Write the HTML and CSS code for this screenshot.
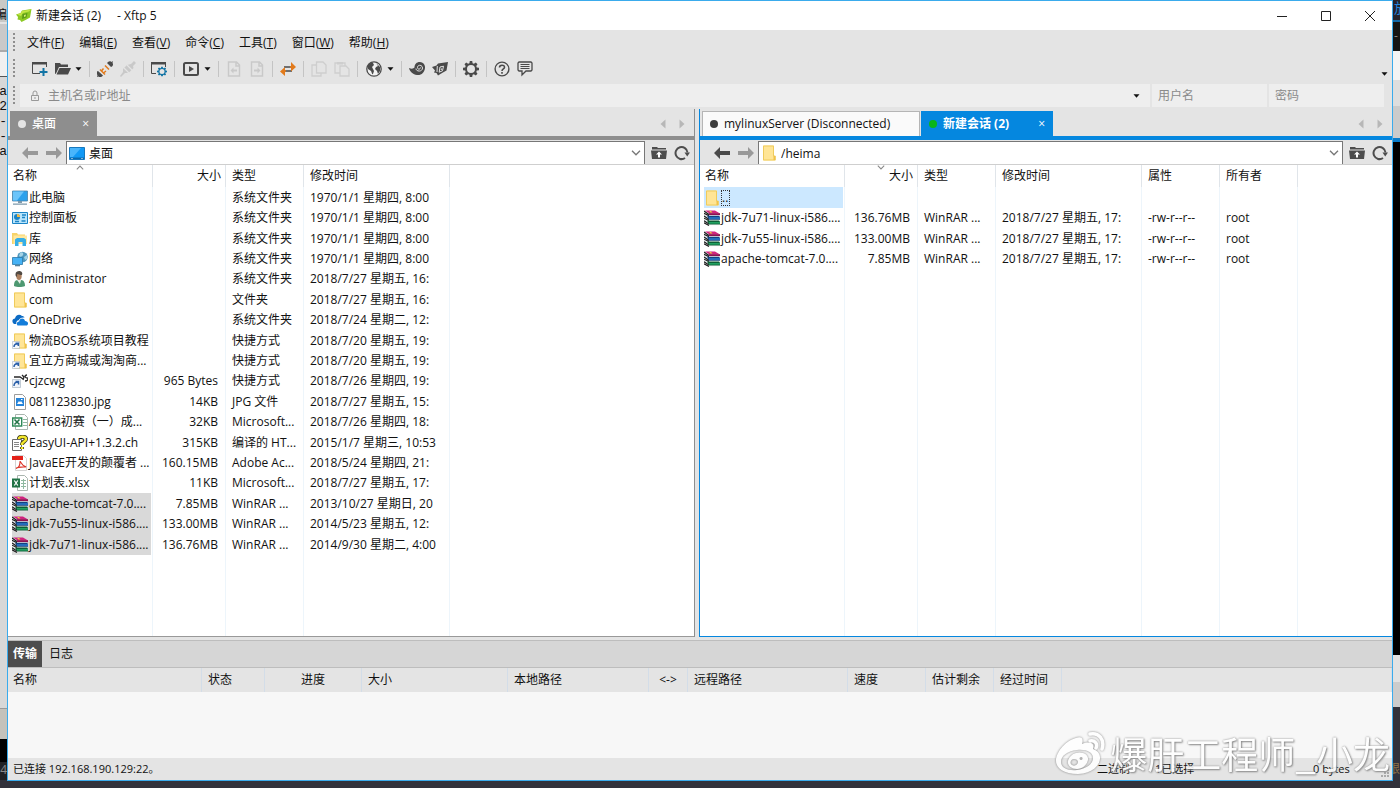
FILE: index.html
```html
<!DOCTYPE html>
<html lang="zh-CN">
<head>
<meta charset="utf-8">
<title>新建会话 (2) - Xftp 5</title>
<link rel="stylesheet" href="styles.css">
</head>
<body>
<svg class="defs" aria-hidden="true">
  <symbol id="rar" viewBox="0 0 16 16"><path fill="#e9ecef" d="M0 1h5v14L0 12z"/><path fill="none" stroke="#1d1d1d" stroke-width="1.100" d="M0 1l5 3.500M0 3.300l5 2.400M0 6l5 3.200M0 8.200l5 2.200M0 10.800l5 3.200M0 12.800l5 2.600"/><path fill="#d0237f" d="M1 .5h10l5 3H5.500z"/><path fill="#8f1150" d="M5 3.200h11v2H5z"/><path fill="#f4f4f4" d="M5 5h10v.8H5zM5 9.800h10v.7H5zM5 14.600h10v.7H5z"/><path fill="#12427f" d="M3 5.800h12l1 1v3H5z"/><path fill="#2a7fd6" d="M5 7.300h11v1.400H5z"/><path fill="#0c5f36" d="M3 10.600h12l1 1v3H5z"/><path fill="#27b26c" d="M5 12.200h11v1.300H5z"/><path fill="#e3cf3b" d="M5 1h2l1.500 1.600H6.500z"/></symbol>
  <symbol id="folder" viewBox="0 0 16 16"><path fill="#ffe596" d="M2 .500h11V11h1.500v4.500H2z"/><path fill="none" stroke="#efcb5c" d="M2.500 1h10v10h1.800v4H2.500z"/><path fill="#f0c14b" d="M12.500 11H14v4h-1.500z"/></symbol>
  <symbol id="shortcut" viewBox="0 0 16 16"><use href="#folder"/><path fill="#f5f8fc" stroke="#a9b6c4" stroke-width=".6" d="M.5 8.500h7v7h-7z"/><path fill="none" stroke="#2a5fa8" stroke-width="1.500" d="M2 14c0-2 1-3.200 3.800-3.200M3.500 10.300h2.800V13"/></symbol>
  <symbol id="desktop" viewBox="0 0 16 13"><path fill="#1199f5" stroke="#1878bd" d="M.5.500h15v12H.5z"/><path fill="#49b5fb" d="M1 1h11L4 10H1z"/><path fill="#0b69ad" d="M1 10.500h14V12H1z"/><path fill="#fff" d="M2 11h2v.6H2zM12 11h2v.6h-2z"/></symbol>
  <symbol id="pc" viewBox="0 0 16 16"><path fill="#2ba1ec" stroke="#4b83a8" stroke-width=".8" d="M.5 1h15v10H.5z"/><path fill="#6cc5fa" d="M1 1.500h11l-7 9H1z"/><path fill="#7e99ab" d="M6 11h4v2H6zM1 13.500h14v1.300H1z"/></symbol>
  <symbol id="panel" viewBox="0 0 16 16"><path fill="#b9e4fb" stroke="#1b84c6" d="M.5 2.500h15v11H.5z"/><circle cx="5" cy="7" r="3" fill="#1b84c6"/><path fill="#f7b93e" d="M5 7V4a3 3 0 0 1 3 3z"/><path stroke="#1b84c6" stroke-width="1.400" d="M10 5h4M10 7.500h3M3 11.500h4M9.500 11h4"/></symbol>
  <symbol id="library" viewBox="0 0 16 16"><path fill="#f7d36a" d="M0 2h5l1 1.500h7V13H0z"/><path fill="#ffe79e" d="M1.500 4.500H15V13H1.500z"/><path fill="#37aee6" d="M3 8.500 5 7h7l2 1.500V15h-3.500v-4h-4v4H3z"/></symbol>
  <symbol id="network" viewBox="0 0 16 16"><circle cx="10.500" cy="6" r="5.200" fill="#4e97bd"/><path fill="#a4d3e6" d="M8 2c2-2 4 0 3 2S8 6 7 5zM12 6l3-2v4l-2 1z"/><path fill="#46b2f5" stroke="#2b78aa" stroke-width=".8" d="M.5 6.500h10v7H.5z"/><path fill="#57849d" d="M3 14h5v1.300H3z"/></symbol>
  <symbol id="person" viewBox="0 0 16 16"><path fill="#4d9871" d="M2 15c0-4 1-6 4-6h3c3 0 4 3 4 6-3 1.300-8 1.300-11 0z"/><path fill="#e8efe7" d="m5 9 3 4 1-4z"/><ellipse cx="7" cy="5" rx="2.700" ry="3.900" fill="#ad805f"/><path fill="#514a43" d="M3.700 5C3 2 4 .2 7 0c3 0 4 2.400 2.900 4C8 4 6 3 5.200 2.900L5 6z"/></symbol>
  <symbol id="onedrive" viewBox="0 0 16 16"><path fill="#0c6bc4" d="M1 11C-.5 8.500 1 6.500 3 6.500 3.500 3 7.500 1.500 10 4c1.200 0 2 .5 2.500 1.500C9 5 7 7 6.700 8.200 4.800 8.500 4 10 4.300 12H2z"/><path fill="#137dda" d="M5.500 13.500C4 12 5 9.500 7.200 9.500 7.500 6 12 5.500 13 9c3 0 4 3 2 4.500z"/></symbol>
  <symbol id="tool" viewBox="0 0 16 16"><path fill="none" stroke="#292929" stroke-width="1.300" d="M2 4h6l3 2M10 2l2 2-1 3M15 2c-3 0-2 3 0 3s1 3-2 3"/><path fill="#eef3fa" stroke="#9eacba" stroke-width=".6" d="M.5 6.500h8v8h-8z"/><path fill="none" stroke="#2a5fa8" stroke-width="1.500" d="M2 13c0-3 1-4 4-4M3.500 8.500h3v3"/></symbol>
  <symbol id="image" viewBox="0 0 16 16"><path fill="#fff" stroke="#9c9c9c" d="M2.500.5h8l3 3v12h-11z"/><path fill="#2684d9" d="M4 4h8v8H4z"/><path fill="#fff" d="m5 10 2-3 1 1.300L9 7l2 3zM9 5h1.500v1H9z"/></symbol>
  <symbol id="excel" viewBox="0 0 16 16"><path fill="#fff" stroke="#a9b5ae" d="M5.500 .5h7l3 3v12h-10z"/><path stroke="#8fb8a0" d="M9 5.500h5M9 8.500h5M9 11.500h5M11.500 4v10"/><path fill="#217346" d="M0 3.500h8v9H0z"/><path fill="none" stroke="#fff" stroke-width="1.300" d="m2.300 5.500 3.500 5M5.800 5.500l-3.500 5"/></symbol>
  <symbol id="sheet" viewBox="0 0 16 16"><path fill="#fff" stroke="#a9b5ae" d="M3.500 .5h9l3 3v12h-12z"/><path stroke="#8fb8a0" d="M11 5.500h4M11 8.500h4M11 11.500h4"/><path fill="#fff" stroke="#2f8a58" stroke-width="1.400" d="M.7 4h9v8h-9z"/><path fill="none" stroke="#217346" stroke-width="1.600" d="m2.500 5.500 5 5M7.500 5.500l-5 5"/></symbol>
  <symbol id="chm" viewBox="0 0 16 16"><path fill="#fff" stroke="#6b6b6b" d="M.5 4.500h9v11h-9z"/><path stroke="#888" d="M2 7.500h5M2 9.500h5M2 11.500h5"/><path fill="none" stroke="#343315" stroke-width="4" d="M7 4c0-3 7-3 7 0s-4 2-4 6M10 12v2"/><path fill="none" stroke="#f3e72b" stroke-width="2.500" d="M7 4c0-3 7-3 7 0s-4 2-4 6M10 12v2"/></symbol>
  <symbol id="pdf" viewBox="0 0 16 16"><path fill="#fff" stroke="#d4d4d4" d="M3.500.5h8l3 3v12h-11z"/><path fill="#e32119" d="M0 1h11v4H0z"/><path fill="none" stroke="#dc372b" stroke-width="1.100" d="M4 13.500c3-1 4-4 4-6.500s1.500 4 5.500 4.500c2 1-7-.5-9.500 2"/></symbol>
  <symbol id="left" viewBox="0 0 16 12"><path fill="currentColor" d="M0 6 6 0v4h10v4H6v4z"/></symbol>
  <symbol id="right" viewBox="0 0 16 12"><path fill="currentColor" d="M16 6 10 0v4H0v4h10v4z"/></symbol>
  <symbol id="chevron" viewBox="0 0 10 6"><path fill="none" stroke="currentColor" stroke-width="1.300" d="m1 .8 4 4 4-4"/></symbol>
  <symbol id="up" viewBox="0 0 16 16"><path fill="#4d4d4d" d="M1 2h5l1 1h8v1.500H1zM0 5.500h16L15 14H1z"/><path fill="#fff" d="m8 6.500 3 3H9V12.500H7V9.500H5z"/></symbol>
  <symbol id="reload" viewBox="0 0 16 16"><path fill="none" stroke="#4d4d4d" stroke-width="2" d="M11 13A6 6 0 1 1 13.500 7.500"/><path fill="#4d4d4d" d="M10.500 7.500H16l-2.800 4z"/></symbol>
  <symbol id="caret" viewBox="0 0 7 4"><path fill="#111" d="M.5.300h6L3.500 3.800z"/></symbol>
  <symbol id="prev" viewBox="0 0 6 10"><path fill="#b7b7b7" d="M5.500.500v9L.5 5z"/></symbol>
  <symbol id="next" viewBox="0 0 6 10"><path fill="#b7b7b7" d="M.5.500v9l5-4.500z"/></symbol>
  <symbol id="gear" viewBox="0 0 16 16"><path fill="currentColor" fill-rule="evenodd" d="M6.800 0h2.400l.4 2.200 1.300.5L12.800 1.500l1.700 1.700-1.200 1.900.5 1.300 2.200.4v2.400l-2.200.4-.5 1.300 1.200 1.900-1.700 1.700-1.900-1.200-1.300.5L9.200 16H6.800l-.4-2.200-1.300-.5-1.900 1.200-1.700-1.700 1.200-1.900-.5-1.300L0 9.200V6.800l2.200-.4.500-1.300-1.200-1.900 1.700-1.700 1.900 1.200 1.300-.5zM8 4a4 4 0 1 0 0 8 4 4 0 0 0 0-8z"/></symbol>
</svg>

<aside class="edge edge-left" aria-hidden="true">
  <span class="frag frag-menu">编</span>
  <pre class="frag frag-term">1

ta
42
--
--
ta</pre>
  <span class="frag frag-clock">24</span>
</aside>

<main class="window">
  <header class="titlebar">
    <svg class="logo" viewBox="0 0 16 16"><path fill="#8cc924" d="M0 6.500 4.500 5 6 2.500 15.500 1 14 9.500l-4 2.200L5.500 14 4 12l-2.500-.5L2 9z"/><path fill="#c3e545" d="M1 6.500 5 5l1-2 9-1.500-2 2-6 1.500-2 3z"/><path fill="#5c9c17" d="m6.500 6 5-1-1 4.500L6 11z"/><path fill="#d6ee75" d="m8 7 2-.5-.5 2L8 9z"/></svg>
    <h1 class="title"><span>新建会话 (2)</span><span>- Xftp 5</span></h1>
    <div class="winbuttons">
      <button aria-label="最小化"><svg viewBox="0 0 12 12"><path d="M1 6.500h10"/></svg></button>
      <button aria-label="最大化"><svg viewBox="0 0 12 12"><path d="M1.500 1.500h9v9h-9z"/></svg></button>
      <button aria-label="关闭"><svg viewBox="0 0 12 12"><path d="m1 1 10 10M11 1 1 11"/></svg></button>
    </div>
  </header>

  <nav class="menubar">
    <i class="grip"></i>
    <button>文件(<u>F</u>)</button><button>编辑(<u>E</u>)</button><button>查看(<u>V</u>)</button><button>命令(<u>C</u>)</button><button>工具(<u>T</u>)</button><button>窗口(<u>W</u>)</button><button>帮助(<u>H</u>)</button>
  </nav>

  <div class="toolbar">
    <i class="grip"></i>
    <button aria-label="新建"><svg viewBox="0 0 16 16"><path fill="#4a4a4a" d="M0 1h15v2.500H0z"/><path fill="none" stroke="#4a4a4a" d="M.5 2v10.500H8M14.500 2v4"/><path stroke="#1274a5" stroke-width="2" d="M11.500 7v8M7.500 11h8"/></svg></button>
    <button class="drop" aria-label="打开"><svg viewBox="0 0 16 16"><path fill="#4a4a4a" d="M0 2h5l1 1.500h7V6H4l-3 6.500L0 13z"/><path fill="#4a4a4a" d="M4.500 7H16l-3 6.500H1.500z"/></svg><svg class="caret"><use href="#caret"/></svg></button>
    <i class="sep"></i>
    <button aria-label="重新连接"><svg viewBox="0 0 16 16"><path fill="#4a4a4a" d="M10.500 1.500C12 0 14 0 14.500 1L16 0l-.5 2c1 1 .5 2.500-.5 3.500l-1 .5-4-4zM0 10.500l1-.5 5 4.500-1 1c-1.500 1-3 .8-3.500 0L0 16l.5-2c-.8-1-1-2.500-.5-3.500z"/><path stroke="#e27a1b" stroke-width="1.500" fill="none" d="m3 8.500 5 5M4.500 10l2-2.500M6.500 12l2.500-2M8 4.500l4 4"/></svg></button>
    <button aria-label="断开" disabled><svg viewBox="0 0 16 16"><path fill="#c9c9c9" d="m11 3 3-3 2 2-3 3 .5 2-4 4-2 1H5l-4 4-1-1 3-4V8l4-4z"/><path stroke="#e4e4e4" stroke-width="1.200" d="m4 7 5 5M7 4l5 5"/></svg></button>
    <i class="sep"></i>
    <button aria-label="会话属性"><svg viewBox="0 0 16 16"><path fill="#4a4a4a" d="M0 1h15v2.500H0z"/><path fill="none" stroke="#4a4a4a" d="M.5 2v10.500H5M14.500 2v4"/><g color="#1274a5"><use href="#gear" x="6" y="5.500" width="10" height="10"/></g></svg></button>
    <i class="sep"></i>
    <button class="drop wide" aria-label="执行"><svg viewBox="0 0 18 16"><rect x="2" y="2" width="14" height="12" rx="1.500" fill="none" stroke="#4a4a4a" stroke-width="2"/><path fill="#4a4a4a" d="m7 5 5 3-5 3z"/></svg><svg class="caret"><use href="#caret"/></svg></button>
    <i class="sep"></i>
    <button aria-label="下载" disabled><svg viewBox="0 0 16 16"><path fill="none" stroke="#c9c9c9" stroke-width="1.500" d="M2.500 1h8l3 3v11h-11zM10 1v4h3.500"/><path fill="#c9c9c9" d="m4.500 9.500 3-3v2H11v2H7.500v2z"/></svg></button>
    <button aria-label="上传" disabled><svg viewBox="0 0 16 16"><path fill="none" stroke="#c9c9c9" stroke-width="1.500" d="M2.500 1h8l3 3v11h-11zM10 1v4h3.500"/><path fill="#c9c9c9" d="m11.500 9.500-3-3v2H5v2h3.500v2z"/></svg></button>
    <i class="sep"></i>
    <button aria-label="同步"><svg viewBox="0 0 16 16"><path stroke="#4a4a4a" stroke-width="1.300" d="M4 6h8M4 10h8"/><path fill="#e27a1b" d="M10 5.300h1V1l5 5-5 4.500V6.700h-1zM6 9.300H5V6l-5 4.500L5 15v-4.300h1z"/></svg></button>
    <i class="sep"></i>
    <button aria-label="复制" disabled><svg viewBox="0 0 16 16"><path fill="none" stroke="#cecece" stroke-width="1.300" d="M5.500 1H12l3 3v8H5.500zM5.500 4H1v11h9v-3"/></svg></button>
    <button aria-label="粘贴" disabled><svg viewBox="0 0 16 16"><path fill="none" stroke="#cecece" stroke-width="1.300" d="M6 5h6l3 3v7H6zM6 12H1V2h10v3"/><path fill="#cecece" d="M3 1h6v2.500H3z"/></svg></button>
    <i class="sep"></i>
    <button class="drop wide" aria-label="语言"><svg viewBox="0 0 18 16"><circle cx="9" cy="8" r="7.200" fill="#f2f2f2" stroke="#4a4a4a" stroke-width="1.300"/><path fill="#4a4a4a" d="M3 4c2-2 4-3 5-2l1 2-2 2 1 2 1 2-1 3c-1 1-1-1-2-3L3 8zM11 2l4 4v4l-2 3-1-3-2-2 1-2 2-1z"/></svg><svg class="caret"><use href="#caret"/></svg></button>
    <i class="sep"></i>
    <button aria-label="Xshell"><svg viewBox="0 0 16 16"><path fill="#4a4a4a" d="M0 7c2.500 1 4.500.8 5.500-.5C5.500 3 8 .8 11 1c3.500.2 5.300 3 5 6-.5 4.500-3.500 7.500-8 7C4 13.500 1 11 0 7z"/><path fill="none" stroke="#e4e4e4" d="M7 7.500c0 3.500 6.500 3.500 6.500-.5 0-3.500-5-3.500-5-.5 0 2.300 3 2 3 0"/></svg></button>
    <button aria-label="Xftp"><svg viewBox="0 0 16 16"><path fill="#4a4a4a" d="M0 6 4.500 4.500 6 2.500 16 1l-1.500 8.500-4 2.200L6 14.500 4.500 12 2 11.500l1-2z"/><path fill="none" stroke="#e4e4e4" d="M5.300 5 5 11M8 6l3.500-.8-1 4.600-3.300 1.400zM9.500 7.500l-.3 1.500"/></svg></button>
    <i class="sep"></i>
    <button class="dark" aria-label="选项"><svg><use href="#gear"/></svg></button>
    <i class="sep"></i>
    <button aria-label="帮助"><svg viewBox="0 0 16 16"><circle cx="8" cy="8" r="6.900" fill="none" stroke="#4a4a4a" stroke-width="1.400"/><path fill="none" stroke="#4a4a4a" stroke-width="1.600" d="M5.500 6.500c0-3 5-3 5-.3C10.500 8 8 7.700 8 10M8 11v1.800"/></svg></button>
    <button aria-label="反馈"><svg viewBox="0 0 16 16"><path fill="none" stroke="#4a4a4a" stroke-width="1.300" d="M2 1h12l1 1v7l-1 1H9l-4 4v-4H2L1 9V2z"/><path stroke="#4a4a4a" d="M3.500 3.500h9M3.500 5.500h9M3.500 7.500h9"/></svg></button>
    <svg class="caret overflow"><use href="#caret"/></svg>
  </div>

  <form class="address">
    <i class="grip"></i>
    <div class="host">
      <svg class="lock" viewBox="0 0 9 12"><path fill="none" stroke="#999" d="M1 5.500h7v5H1zM2.500 5V3a2 2 0 0 1 4 0v2M4.500 7v2"/></svg>
      <input type="text" aria-label="主机名或IP地址" placeholder="主机名或IP地址">
      <button type="button" aria-label="历史"><svg class="caret"><use href="#caret"/></svg></button>
    </div>
    <input class="cred" type="text" aria-label="用户名" placeholder="用户名">
    <input class="cred" type="password" aria-label="密码" placeholder="密码">
  </form>

  <div class="panes">
    <section class="pane local">
      <div class="tabs">
        <button class="tab current"><i class="dot"></i><span>桌面</span><span class="x">×</span></button>
        <span class="tabnav"><button aria-label="上一个"><svg><use href="#prev"/></svg></button><button aria-label="下一个"><svg><use href="#next"/></svg></button></span>
      </div>
      <div class="pathrow">
        <div class="navs"><button class="off" aria-label="后退"><svg><use href="#left"/></svg></button><button class="off" aria-label="前进"><svg><use href="#right"/></svg></button></div>
        <div class="path"><svg class="pathicon desk"><use href="#desktop"/></svg><input type="text" aria-label="本地路径" value="桌面"><button aria-label="展开"><svg class="chev"><use href="#chevron"/></svg></button></div>
        <div class="acts"><button aria-label="上级目录"><svg><use href="#up"/></svg></button><button aria-label="刷新"><svg><use href="#reload"/></svg></button></div>
      </div>
      <div class="list">
        <table class="files">
          <colgroup><col class="c-name"><col class="c-size"><col class="c-type"><col class="c-date"><col></colgroup>
          <thead><tr><th>名称<svg class="sort asc"><use href="#chevron"/></svg></th><th class="num">大小</th><th>类型</th><th>修改时间</th><th></th></tr></thead>
          <tbody>
            <tr><td><span class="name"><svg><use href="#pc"/></svg>此电脑</span></td><td></td><td>系统文件夹</td><td>1970/1/1 星期四, 8:00</td><td></td></tr>
            <tr><td><span class="name"><svg><use href="#panel"/></svg>控制面板</span></td><td></td><td>系统文件夹</td><td>1970/1/1 星期四, 8:00</td><td></td></tr>
            <tr><td><span class="name"><svg><use href="#library"/></svg>库</span></td><td></td><td>系统文件夹</td><td>1970/1/1 星期四, 8:00</td><td></td></tr>
            <tr><td><span class="name"><svg><use href="#network"/></svg>网络</span></td><td></td><td>系统文件夹</td><td>1970/1/1 星期四, 8:00</td><td></td></tr>
            <tr><td><span class="name"><svg><use href="#person"/></svg>Administrator</span></td><td></td><td>系统文件夹</td><td>2018/7/27 星期五, 16:</td><td></td></tr>
            <tr><td><span class="name"><svg><use href="#folder"/></svg>com</span></td><td></td><td>文件夹</td><td>2018/7/27 星期五, 16:</td><td></td></tr>
            <tr><td><span class="name"><svg><use href="#onedrive"/></svg>OneDrive</span></td><td></td><td>系统文件夹</td><td>2018/7/24 星期二, 12:</td><td></td></tr>
            <tr><td><span class="name"><svg><use href="#shortcut"/></svg>物流BOS系统项目教程</span></td><td></td><td>快捷方式</td><td>2018/7/20 星期五, 19:</td><td></td></tr>
            <tr><td><span class="name"><svg><use href="#shortcut"/></svg>宜立方商城或淘淘商...</span></td><td></td><td>快捷方式</td><td>2018/7/20 星期五, 19:</td><td></td></tr>
            <tr><td><span class="name"><svg><use href="#tool"/></svg>cjzcwg</span></td><td class="num">965 Bytes</td><td>快捷方式</td><td>2018/7/26 星期四, 19:</td><td></td></tr>
            <tr><td><span class="name"><svg><use href="#image"/></svg>081123830.jpg</span></td><td class="num">14KB</td><td>JPG 文件</td><td>2018/7/27 星期五, 15:</td><td></td></tr>
            <tr><td><span class="name"><svg><use href="#sheet"/></svg>A-T68初赛（一）成...</span></td><td class="num">32KB</td><td>Microsoft...</td><td>2018/7/26 星期四, 18:</td><td></td></tr>
            <tr><td><span class="name"><svg><use href="#chm"/></svg>EasyUI-API+1.3.2.ch</span></td><td class="num">315KB</td><td>编译的 HT...</td><td>2015/1/7 星期三, 10:53</td><td></td></tr>
            <tr><td><span class="name"><svg><use href="#pdf"/></svg>JavaEE开发的颠覆者 ...</span></td><td class="num">160.15MB</td><td>Adobe Ac...</td><td>2018/5/24 星期四, 21:</td><td></td></tr>
            <tr><td><span class="name"><svg><use href="#excel"/></svg>计划表.xlsx</span></td><td class="num">11KB</td><td>Microsoft...</td><td>2018/7/27 星期五, 17:</td><td></td></tr>
            <tr class="picked"><td><span class="name"><svg><use href="#rar"/></svg>apache-tomcat-7.0....</span></td><td class="num">7.85MB</td><td>WinRAR ...</td><td>2013/10/27 星期日, 20</td><td></td></tr>
            <tr class="picked"><td><span class="name"><svg><use href="#rar"/></svg>jdk-7u55-linux-i586....</span></td><td class="num">133.00MB</td><td>WinRAR ...</td><td>2014/5/23 星期五, 12:</td><td></td></tr>
            <tr class="picked"><td><span class="name"><svg><use href="#rar"/></svg>jdk-7u71-linux-i586....</span></td><td class="num">136.76MB</td><td>WinRAR ...</td><td>2014/9/30 星期二, 4:00</td><td></td></tr>
            <tr class="rest"><td></td><td></td><td></td><td></td><td></td></tr>
          </tbody>
        </table>
      </div>
    </section>

    <section class="pane remote">
      <div class="tabs">
        <button class="tab idle"><i class="dot"></i><span>mylinuxServer (Disconnected)</span></button>
        <button class="tab current"><i class="dot"></i><span>新建会话 (2)</span><span class="x">×</span></button>
        <span class="tabnav"><button aria-label="上一个"><svg><use href="#prev"/></svg></button><button aria-label="下一个"><svg><use href="#next"/></svg></button></span>
      </div>
      <div class="pathrow">
        <div class="navs"><button aria-label="后退"><svg><use href="#left"/></svg></button><button class="off" aria-label="前进"><svg><use href="#right"/></svg></button></div>
        <div class="path"><svg class="pathicon"><use href="#folder"/></svg><input type="text" aria-label="远程路径" value="/heima"><button aria-label="展开"><svg class="chev"><use href="#chevron"/></svg></button></div>
        <div class="acts"><button aria-label="上级目录"><svg><use href="#up"/></svg></button><button aria-label="刷新"><svg><use href="#reload"/></svg></button></div>
      </div>
      <div class="list">
        <table class="files">
          <colgroup><col class="c-name"><col class="c-size"><col class="c-type"><col class="c-date"><col class="c-attr"><col class="c-attr"><col></colgroup>
          <thead><tr><th>名称</th><th class="num">大小<svg class="sort"><use href="#chevron"/></svg></th><th>类型</th><th>修改时间</th><th>属性</th><th>所有者</th><th></th></tr></thead>
          <tbody>
            <tr class="active"><td><span class="name"><svg><use href="#folder"/></svg><span class="focus">..</span></span></td><td></td><td></td><td></td><td></td><td></td><td></td></tr>
            <tr><td><span class="name"><svg><use href="#rar"/></svg>jdk-7u71-linux-i586....</span></td><td class="num">136.76MB</td><td>WinRAR ...</td><td>2018/7/27 星期五, 17:</td><td>-rw-r--r--</td><td>root</td><td></td></tr>
            <tr><td><span class="name"><svg><use href="#rar"/></svg>jdk-7u55-linux-i586....</span></td><td class="num">133.00MB</td><td>WinRAR ...</td><td>2018/7/27 星期五, 17:</td><td>-rw-r--r--</td><td>root</td><td></td></tr>
            <tr><td><span class="name"><svg><use href="#rar"/></svg>apache-tomcat-7.0....</span></td><td class="num">7.85MB</td><td>WinRAR ...</td><td>2018/7/27 星期五, 17:</td><td>-rw-r--r--</td><td>root</td><td></td></tr>
            <tr class="rest"><td></td><td></td><td></td><td></td><td></td><td></td><td></td></tr>
          </tbody>
        </table>
      </div>
    </section>
  </div>

  <section class="transfers">
    <div class="subtabs"><button class="on">传输</button><button>日志</button></div>
    <table class="queue">
      <colgroup><col class="q-name"><col class="q-state"><col class="q-prog"><col class="q-size"><col class="q-local"><col class="q-dir"><col class="q-remote"><col class="q-speed"><col class="q-time"><col class="q-time"><col></colgroup>
      <thead><tr><th>名称</th><th>状态</th><th class="mid">进度</th><th>大小</th><th>本地路径</th><th class="mid">&lt;-&gt;</th><th>远程路径</th><th>速度</th><th>估计剩余</th><th>经过时间</th><th></th></tr></thead>
    </table>
  </section>

  <footer class="status">
    <span class="conn">已连接 192.168.190.129:22。</span>
    <span class="s-mode">二进制</span>
    <span class="s-pick">1已选择</span>
    <span class="s-bytes">0 bytes</span>
    <svg class="resize" viewBox="0 0 9 9"><path fill="#aaa" d="M6 0h2v2H6zM3 3h2v2H3zM6 3h2v2H6zM0 6h2v2H0zM3 6h2v2H3zM6 6h2v2H6z"/></svg>
  </footer>
</main>

<aside class="edge edge-right" aria-hidden="true">
  <span class="frag frag-play">放</span>
  <span class="frag frag-dash">-</span>
  <span class="frag frag-limit">限</span>
</aside>

<div class="watermark">
  <svg viewBox="0 0 50 44"><path fill="#fff" fill-rule="evenodd" d="M20 7c5-2 8 0 6 6 8-3 13-1 11 5 13 4 8 24-15 25C8 43 0 37 0 30 0 20 11 9 20 7zM21 19c-10 1-16 6-16 12s7 9 16 8 16-6 16-12-7-9-16-8zM20 22c7-2 13 2 12 7s-6 9-11 9c-6 0-10-4-9-8s4-7 8-8zM18 28c-3 0-5 4-2 6s6-1 6-3-2-3-4-3zM25 26a1.500 1.500 0 1 0 .1 3 1.500 1.500 0 0 0-.1-3z"/><path fill="none" stroke="#fff" stroke-width="3.500" stroke-linecap="round" d="M34 3c9-2 15 6 12 15M34 10c5-1 8 3 6 7"/></svg>
  <span>爆肝工程师_小龙</span>
</div>
</body>
</html>
```
FILE: styles.css
```css
* { box-sizing: border-box; }
body {
  margin: 0;
  height: 100vh;
  min-height: 700px;
  display: grid;
  grid-template-columns: 7px minmax(0, 1fr) 7px;
  position: relative;
  overflow: hidden;
  background: #32323b;
  color: #111;
  font: 12px/16px "Open Sans", "Noto Sans CJK SC", sans-serif;
}
button, input { font: inherit; color: inherit; border: 0; padding: 0; margin: 0; background: none; outline: 0; }
button { display: inline-flex; align-items: center; white-space: nowrap; }
svg { display: block; flex: none; width: 16px; height: 16px; }
.defs { position: absolute; width: 0; height: 0; }

/* Desktop showing on both sides of the window */
.edge { position: relative; overflow: hidden; }
.edge-left { background: linear-gradient(#c9c9c6 0 22px, #e3e3e3 22px 24px, #c9c9c9 24px 50px, #aaa 50px 52px, #f0f0f0 52px 76px, #555 76px 77px, #d8d8d8 77px 708px, #999 708px 709px, #c4c2bb 709px 739px, #000 739px 762px, #202124 762px 780px, #32323b 780px); }
.edge-right { background: linear-gradient(#24252e 0 20px, #1469a8 20px 22px, #151515 22px 51px, #f4f4f4 51px 80px, #dedede 80px 106px, #cbcbcb 106px 138px, #087cca 138px 142px, #000 142px 655px, #e2e2e2 655px 682px, #ccc 682px 707px, #32323b 707px); }
.frag { position: absolute; margin: 0; right: 0; }
.frag-menu { top: 7px; }
.frag-term { top: 54px; font: 13px/15px "Liberation Mono", monospace; }
.frag-clock { top: 762px; color: #888; }
.frag-play { top: 0; left: 1px; color: #2384da; font-size: 14px; }
.frag-dash { top: 28px; left: 1px; color: #888; }
.frag-limit { top: 761px; color: #8d7248; }

.window {
  display: flex;
  flex-direction: column;
  min-width: 0;
  margin-bottom: 7px;
  border: 1px solid #3aabec;
  background: #e4e4e4;
}
.titlebar { display: flex; align-items: center; height: 29px; padding-left: 8px; gap: 4px; background: #fff; }
.title { display: flex; gap: 16px; margin: 0; font-size: 12px; font-weight: 400; }
.winbuttons { display: flex; margin-left: auto; }
.winbuttons button { width: 44px; height: 28px; justify-content: center; }
.winbuttons svg { width: 12px; height: 12px; fill: none; stroke: #222; }

.grip { flex: none; width: 2px; height: 20px; margin: 0 5px; background: repeating-linear-gradient(#8e8e8e 0 2px, transparent 2px 4px); }
.menubar { display: flex; align-items: center; height: 26px; gap: 15px; }
.menubar .grip { margin-right: -3px; }
.toolbar { display: flex; align-items: center; height: 26px; gap: 7px; }
.toolbar .grip { margin-right: 10px; }
.drop { gap: 4px; }
.wide svg:first-child { width: 18px; }
.caret { width: 7px; height: 4px; }
.sep { width: 1px; height: 16px; background: #c4c4c4; }
.dark { color: #4a4a4a; }
.overflow { margin: 10px 4px 0 auto; }

.address { display: flex; align-items: center; height: 27px; padding-right: 8px; gap: 2px; color: #8a8a8a; }
.address .grip { margin-right: 3px; }
.host { display: flex; align-items: center; flex: 1; min-width: 0; height: 23px; padding: 0 10px; gap: 8px; background: #eee; }
.host input { flex: 1; min-width: 0; }
.lock { width: 10px; height: 12px; }
.cred { width: 115px; height: 23px; padding: 0 6px; background: #eee; }
::placeholder { color: #8a8a8a; opacity: 1; }

.panes { flex: 1; min-height: 0; display: grid; grid-template-columns: 687fr 4px 693fr; }
.pane { display: flex; flex-direction: column; min-width: 0; min-height: 0; }
.local { --accent: #8e8e8e; border-right: 1px solid #8e8e8e; }
.remote { grid-column: 3; --accent: #0587df; border: 1px solid #0587df; border-width: 0 0 1px 1px; }
.tabs { display: flex; align-items: flex-end; gap: 1px; height: 31px; padding-left: 2px; border-bottom: 4px solid var(--accent); }
.tab { height: 25px; padding: 0 8px; gap: 6px; }
.tab.current { background: var(--accent); color: #fff; }
.tab.idle { width: 218px; background: #fafafa; border: 1px solid #b5b5b5; border-bottom: 0; padding-left: 7px; }
.dot { width: 8px; height: 8px; border-radius: 50%; background: #3c3c3c; }
.local .dot { background: #e4e4e4; }
.remote .current { font-weight: 700; width: 132px; }
.remote .current .dot { background: #09b51a; }
.local .current { width: 87px; font-weight: 500; }
.x { margin-left: auto; font-weight: 400; }
.tabnav { display: flex; align-items: center; gap: 13px; height: 24px; margin-left: auto; padding-right: 9px; }
.tabnav svg { width: 6px; height: 10px; }

.pathrow { display: flex; align-items: stretch; height: 24px; margin-top: 1px; border-bottom: 1px solid #cfcfcf; }
.navs { display: flex; gap: 8px; padding: 0 4px 0 14px; color: #4a4a4a; }
.navs svg { height: 12px; }
.off { color: #999; }
.path { display: flex; align-items: center; flex: 1; min-width: 0; gap: 4px; padding: 0 3px 0 2px; background: #fff; border: solid #777; border-width: 1px 1px 0; }
.path input { flex: 1; min-width: 0; height: 20px; }
.pathicon { height: 18px; }
.desk { height: 13px; }
.chev { width: 10px; height: 6px; color: #777; }
.acts { display: flex; gap: 7px; padding: 0 4px 0 6px; }

.list { flex: 1; min-height: 0; overflow: hidden; background: #fff; border-bottom: 1px solid #999; }
.remote .list { border-bottom: 0; }
table { border-collapse: separate; border-spacing: 0; table-layout: fixed; width: 100%; }
th { position: relative; padding: 0 6px; font-weight: 400; text-align: left; white-space: nowrap; border-right: 1px solid #e0e5ea; }
th:first-child { padding-left: 5px; }
.files { height: 100%; }
.files th { height: 22px; }
.files td { height: 20px; padding: 0 0 0 6px; white-space: nowrap; border-right: 1px solid #edf5fb; }
.files tr:nth-child(5n+1) td, .files tr:nth-child(5n+3) td { height: 21px; }
.files .rest td { height: auto !important; }
.files td:first-child { padding: 0 1px 0 4px; }
.files td.num { text-align: right; padding-right: 7px; }
.files th.num { text-align: right; padding-right: 4px; }
.files tr > :last-child { border-right: 0; }
.c-name { width: 145px; }
.c-size { width: 73px; }
.c-type { width: 78px; }
.c-date { width: 146px; }
.c-attr { width: 78px; }
.name { display: flex; align-items: center; gap: 1px; height: 100%; min-height: 20px; overflow: hidden; }
.picked .name { background: #d9d9d9; }
.active .name { background: #cce8ff; }
.focus { padding: 0 2px 0 1px; outline: 1px dotted #333; outline-offset: -1px; }
.sort { position: absolute; top: 0; left: calc(50% - 4px); width: 8px; height: 5px; color: #888; }
.asc { transform: scaleY(-1); }

.transfers { margin-top: 3px; height: 118px; background: #f7f7f7; }
.subtabs { display: flex; height: 28px; background: #d6d6d6; border: solid #bdbdbd; border-width: 1px 0; }
.subtabs button { padding: 0 7px; }
.subtabs .on { background: #4d4d4d; color: #fff; font-weight: 700; padding: 0 5px; }
.queue { background: #e4e4e4; }
.queue th { height: 24px; border-right: 1px solid #d3dde8; }
.queue th.mid { text-align: center; }
.q-name { width: 194px; }
.q-state { width: 63px; }
.q-prog { width: 97px; }
.q-size { width: 146px; }
.q-local { width: 141px; }
.q-dir { width: 39px; }
.q-remote { width: 160px; }
.q-speed { width: 78px; }
.q-time { width: 68px; }

.status { display: flex; align-items: center; height: 22px; padding-left: 5px; font-size: 11px; }
.conn { margin-right: auto; }
.s-mode { width: 58px; }
.s-pick { width: 158px; }
.s-bytes { width: 68px; }
.resize { width: 9px; height: 9px; align-self: flex-end; margin: 0 2px 2px 0; }

/* Translucent account mark laid over the corner of the desktop */
.watermark { position: absolute; right: 10px; bottom: 10px; display: flex; align-items: center; gap: 4px; color: #fff; font: 37px/50px "Noto Sans CJK SC", sans-serif; opacity: .9; text-shadow: 0 0 2px #777, 1px 1px 2px #888; pointer-events: none; white-space: nowrap; }
.watermark svg { width: 50px; height: 44px; filter: drop-shadow(0 0 1px #777); }
```
